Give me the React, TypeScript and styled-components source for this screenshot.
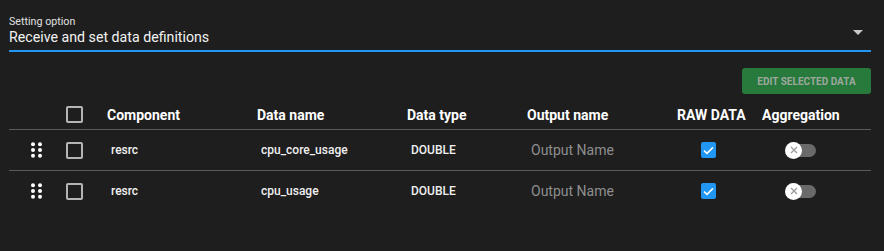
import React, { useState } from "react";
import styled, { createGlobalStyle } from "styled-components";

const GlobalStyle = createGlobalStyle`
  html, body {
    margin: 0;
    padding: 0;
    background: #1e1e1e;
    font-family: Roboto, "Liberation Sans", sans-serif;
    color: #ffffff;
  }
`;

const Page = styled.div`
  width: 884px;
  height: 251px;
  padding: 15px 13px 0 9px;
  box-sizing: border-box;
  background: #1e1e1e;
`;

const SelectField = styled.div`
  position: relative;
  border-bottom: 2px solid #2196f3;
  padding-bottom: 4px;
  display: flex;
  flex-direction: column;
`;

const SelectLabel = styled.div`
  font-size: 10.7px;
  line-height: 13px;
  color: #e0e0e0;
`;

const SelectValue = styled.div`
  font-size: 14.2px;
  line-height: 18px;
  color: #f2f2f2;
`;

const Caret = styled.span`
  position: absolute;
  right: 8px;
  top: 15px;
  width: 0;
  height: 0;
  border-left: 5px solid transparent;
  border-right: 5px solid transparent;
  border-top: 5px solid #c8c8c8;
`;

const Toolbar = styled.div`
  display: flex;
  justify-content: flex-end;
  margin-top: 16px;
`;

const EditButton = styled.button`
  height: 26px;
  width: 129px;
  border: none;
  border-radius: 3px;
  background: #277a3b;
  color: #9ea79f;
  font-family: Roboto, "Liberation Sans", sans-serif;
  font-weight: 700;
  font-size: 10px;
  text-transform: uppercase;
  padding: 0;
`;

const COLS = "46px 40px 150px 150px 120px 150px 85px 1fr";

const Row = styled.div<{ header?: boolean }>`
  display: grid;
  grid-template-columns: ${COLS};
  align-items: center;
  height: ${(p) => (p.header ? "35px" : "40px")};
  border-bottom: ${(p) => (p.header ? "1px solid #5a5a5a" : "none")};
`;

const BodyRow = styled(Row)`
  &:not(:last-child) {
    border-bottom: 1px solid #5a5a5a;
  }
`;

const HeadCell = styled.div<{ pad?: number }>`
  font-size: 14px;
  font-weight: 700;
  color: #ffffff;
  padding-left: ${(p) => p.pad ?? 12}px;
  padding-top: 6px;
  display: flex;
  align-items: center;
`;

const Cell = styled.div<{ pad?: number }>`
  font-size: 12px;
  font-weight: 500;
  color: #f0f0f0;
  padding-left: ${(p) => p.pad ?? 16}px;
  display: flex;
  align-items: center;
`;

const Placeholder = styled.span`
  font-size: 14px;
  font-weight: 400;
  color: #8e8e8e;
`;

const Box = styled.span<{ checked?: boolean }>`
  width: 17px;
  height: 17px;
  box-sizing: border-box;
  border-radius: 2px;
  border: ${(p) => (p.checked ? "none" : "2px solid #b5b5b5")};
  background: ${(p) => (p.checked ? "#2196f3" : "transparent")};
  display: inline-flex;
  align-items: center;
  justify-content: center;
`;

const CheckedBox = styled(Box)`
  width: 15px;
  height: 16px;
`;

const Switch = styled.span`
  position: relative;
  width: 31px;
  height: 17px;
  display: inline-block;
`;

const Track = styled.span`
  position: absolute;
  left: 5px;
  right: 0;
  top: 2px;
  height: 13px;
  border-radius: 7px;
  background: #6a6a6a;
`;

const Thumb = styled.span`
  position: absolute;
  left: 0;
  top: 0;
  width: 17px;
  height: 17px;
  border-radius: 50%;
  background: #ffffff;
  display: flex;
  align-items: center;
  justify-content: center;
`;

const DragIcon = () => (
  <svg width="11" height="16" viewBox="0 0 11 16">
    {[0, 1].map((c) =>
      [0, 1, 2].map((r) => (
        <circle key={`${c}-${r}`} cx={2 + c * 7} cy={2.2 + r * 5.8} r="2" fill="#ffffff" />
      ))
    )}
  </svg>
);

const Tick = () => (
  <svg width="11" height="9" viewBox="0 0 11 9">
    <path d="M1 4.6 L4 7.4 L10 1.4" stroke="#ffffff" strokeWidth="1.5" fill="none" />
  </svg>
);

const Cross = () => (
  <svg width="8" height="8" viewBox="0 0 8 8">
    <path d="M1 1 L7 7 M7 1 L1 7" stroke="#9a9a9a" strokeWidth="1.3" />
  </svg>
);

const rows = [
  { component: "resrc", name: "cpu_core_usage", type: "DOUBLE" },
  { component: "resrc", name: "cpu_usage", type: "DOUBLE" },
];

const App: React.FC = () => {
  const [option] = useState("Receive and set data definitions");

  return (
    <>
      <GlobalStyle />
      <Page>
        <SelectField>
          <SelectLabel>Setting option</SelectLabel>
          <SelectValue>{option}</SelectValue>
          <Caret />
        </SelectField>

        <Toolbar>
          <EditButton>Edit selected data</EditButton>
        </Toolbar>

        <Row header>
          <div />
          <HeadCell pad={11}>
            <Box />
          </HeadCell>
          <HeadCell>Component</HeadCell>
          <HeadCell>Data name</HeadCell>
          <HeadCell>Data type</HeadCell>
          <HeadCell>Output name</HeadCell>
          <HeadCell>RAW DATA</HeadCell>
          <HeadCell>Aggregation</HeadCell>
        </Row>

        {rows.map((r) => (
          <BodyRow key={r.name}>
            <Cell pad={22}>
              <DragIcon />
            </Cell>
            <Cell pad={11}>
              <Box />
            </Cell>
            <Cell>{r.component}</Cell>
            <Cell>{r.name}</Cell>
            <Cell>{r.type}</Cell>
            <Cell>
              <Placeholder>Output Name</Placeholder>
            </Cell>
            <Cell pad={36}>
              <CheckedBox checked>
                <Tick />
              </CheckedBox>
            </Cell>
            <Cell pad={35}>
              <Switch>
                <Track />
                <Thumb>
                  <Cross />
                </Thumb>
              </Switch>
            </Cell>
          </BodyRow>
        ))}
      </Page>
    </>
  );
};

export default App;
